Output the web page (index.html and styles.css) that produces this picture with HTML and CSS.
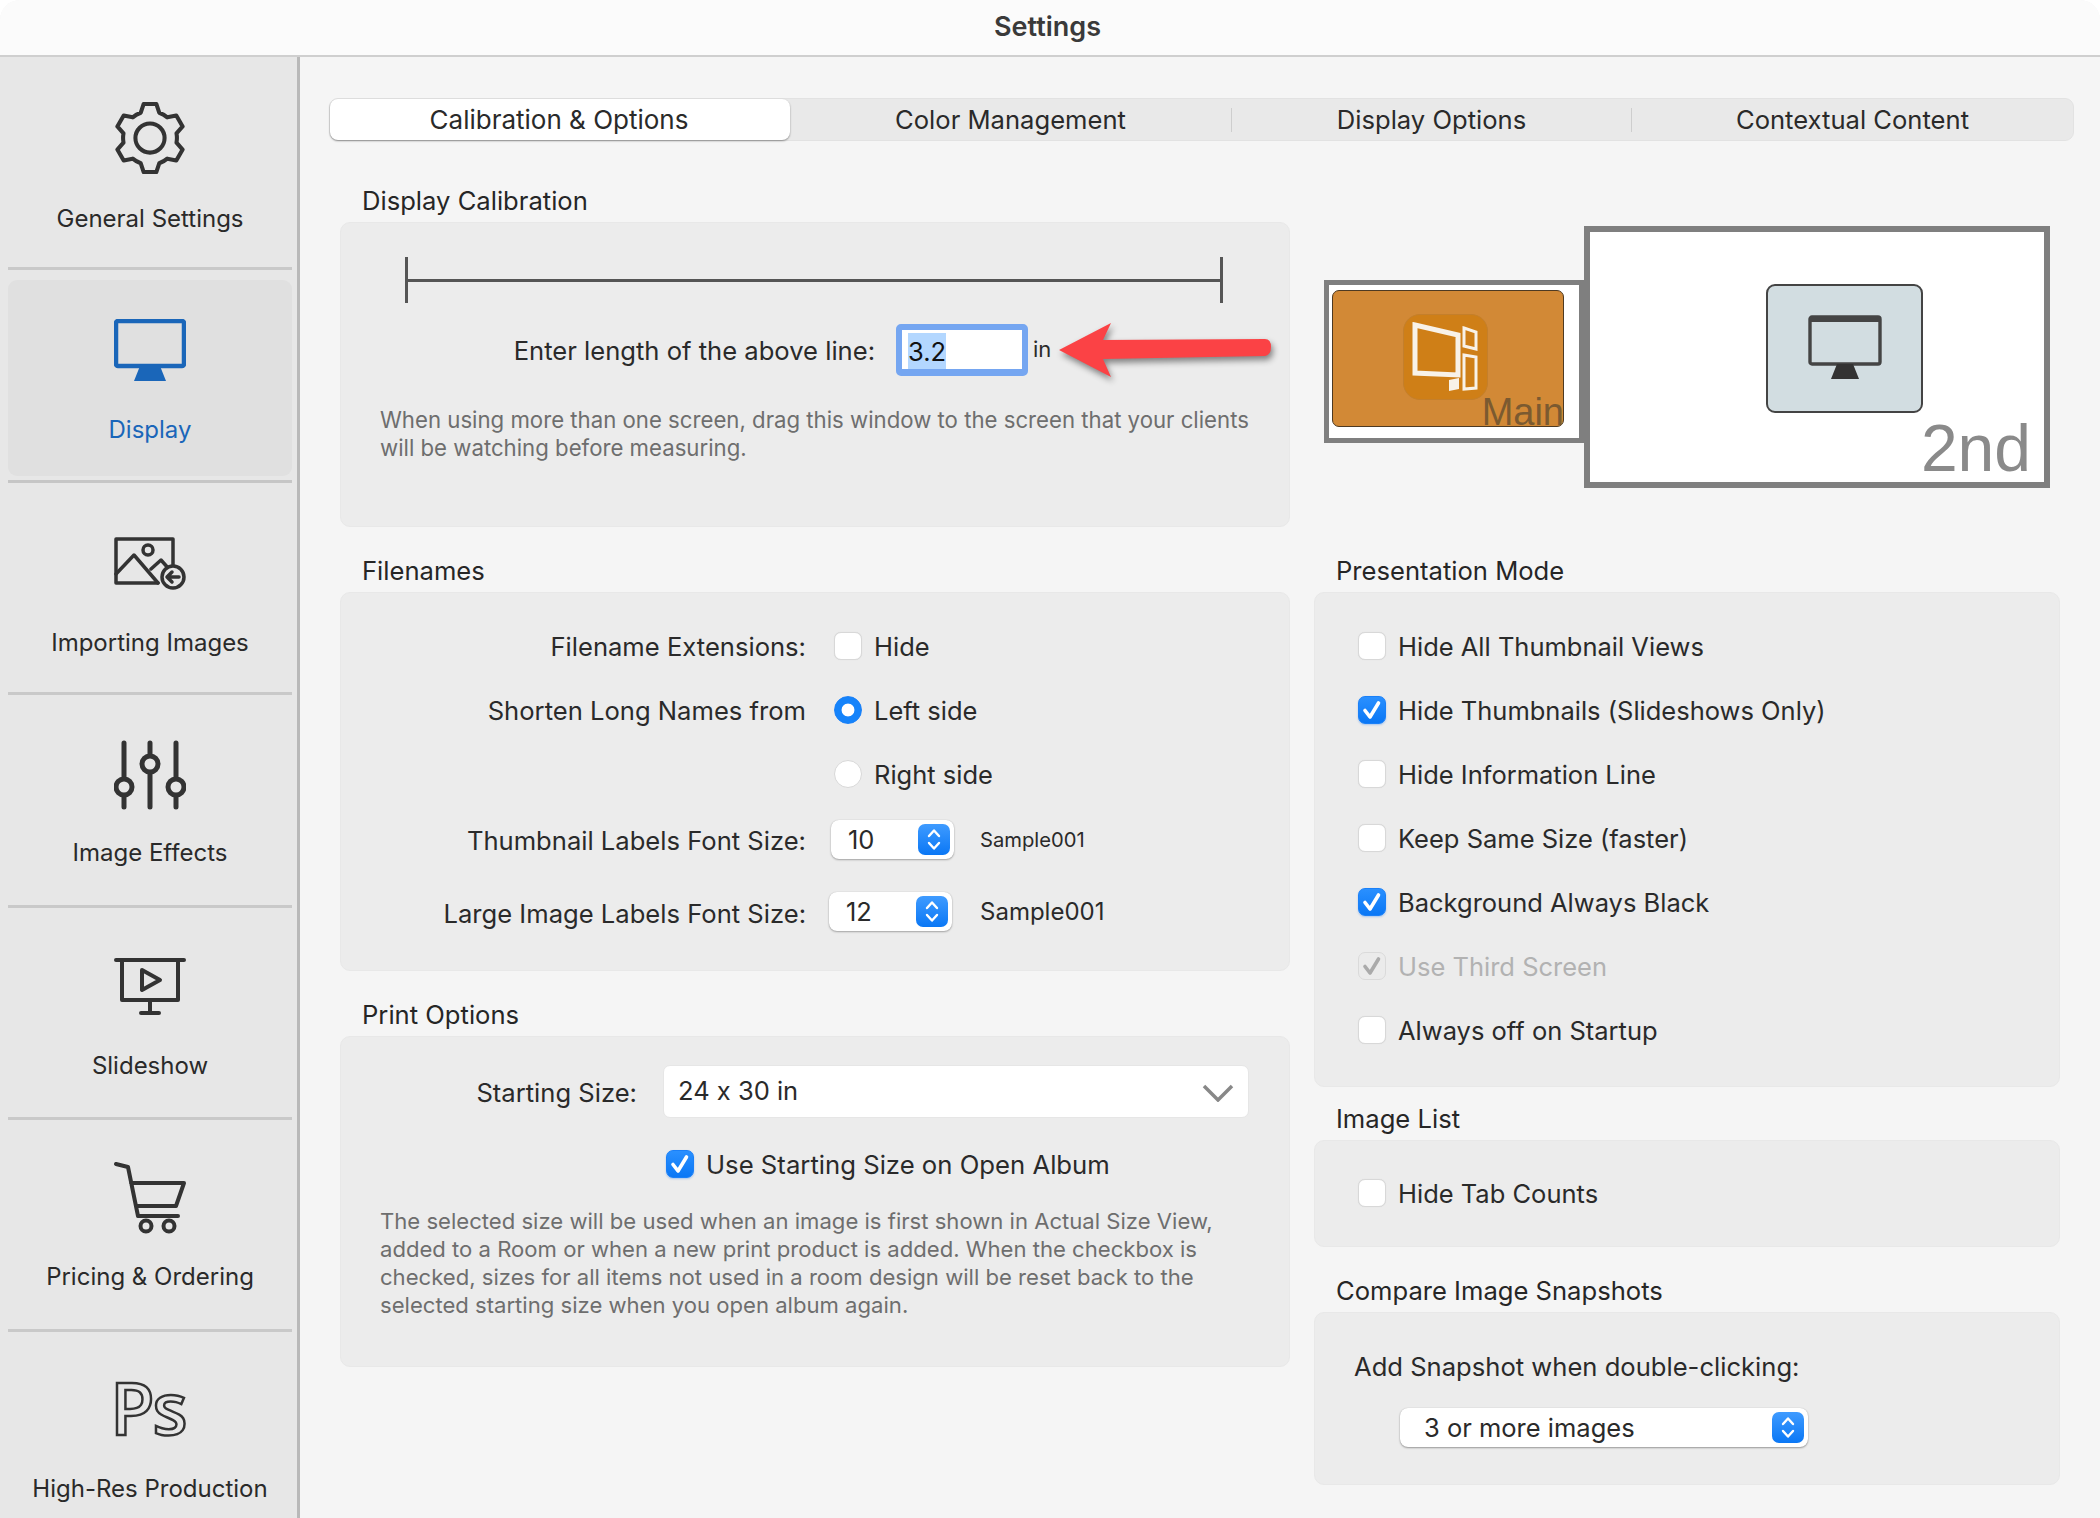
FILE: index.html
```html
<!DOCTYPE html>
<html lang="en">
<head>
<meta charset="utf-8">
<title>Settings</title>
<link rel="stylesheet" href="styles.css">
</head>
<body>
<div class="window">
  <header class="titlebar">Settings</header>
  <div class="content">
    <nav class="sidebar">
      <div class="nav-item nudge-first">
        <div class="icon-slot">
          <svg class="nav-icon gear" viewBox="-36 -37 72 74"><path d="M-9.5-26L-6.5-35H6.5L9.5-26A27 27 0 0 1 17.77-21.23L27.06-23.13L33.56-11.87L27.27-4.77A27 27 0 0 1 27.27 4.77L33.56 11.87L27.06 23.13L17.77 21.23A27 27 0 0 1 9.5 26L6.5 35H-6.5L-9.5 26A27 27 0 0 1-17.77 21.23L-27.06 23.13L-33.56 11.87L-27.27 4.77A27 27 0 0 1-27.27-4.77L-33.56-11.87L-27.06-23.13L-17.77-21.23A27 27 0 0 1-9.5-26Z"/><circle r="15"/></svg>
        </div>
        <span class="nav-label">General Settings</span>
      </div>
      <div class="nav-item is-active">
        <div class="icon-slot">
          <svg class="nav-icon display" viewBox="0 0 72 62"><rect x="2" y="2" width="68" height="45" rx="2"/><path class="solid" d="M26 47H46L52 62H20Z"/></svg>
        </div>
        <span class="nav-label">Display</span>
      </div>
      <div class="nav-item">
        <div class="icon-slot">
          <svg class="nav-icon import" viewBox="0 0 72 54"><path d="M59 39V2H2V46H44"/><circle cx="34" cy="13" r="5"/><path d="M2 37L20 18L44 46M37 32L47 23L55 32"/><circle cx="59" cy="40" r="11"/><path d="M65 40H53M58 35L53 40L58 45"/></svg>
        </div>
        <span class="nav-label">Importing Images</span>
      </div>
      <div class="nav-item nudge-1">
        <div class="icon-slot">
          <svg class="nav-icon sliders" viewBox="0 0 72 70"><path d="M10 3V67M36 3V67M62 3V67"/><circle cx="10" cy="47" r="8"/><circle cx="36" cy="24" r="8"/><circle cx="62" cy="47" r="8"/></svg>
        </div>
        <span class="nav-label">Image Effects</span>
      </div>
      <div class="nav-item nudge-1">
        <div class="icon-slot">
          <svg class="nav-icon slideshow" viewBox="0 0 72 66"><path d="M2 2H70M8 2V42H64V2M36 42V55M27 55H45"/><path d="M28 12L46 22L28 32Z"/></svg>
        </div>
        <span class="nav-label">Slideshow</span>
      </div>
      <div class="nav-item nudge-2">
        <div class="icon-slot">
          <svg class="nav-icon cart" viewBox="0 0 72 72"><path d="M2 2L14 5L24 54H64M17 21H70L62 44H22"/><circle cx="32" cy="64" r="5.5"/><circle cx="55" cy="64" r="5.5"/></svg>
        </div>
        <span class="nav-label">Pricing &amp; Ordering</span>
      </div>
      <div class="nav-item nudge-2 is-last">
        <div class="icon-slot">
          <span class="ps-icon">Ps</span>
        </div>
        <span class="nav-label">High-Res Production</span>
      </div>
    </nav>
    <main class="main">
      <div class="tabs">
        <div class="tab tab-active">Calibration &amp; Options</div>
        <div class="tab tab-color">Color Management</div>
        <div class="tab-sep"></div>
        <div class="tab tab-display">Display Options</div>
        <div class="tab-sep"></div>
        <div class="tab tab-context">Contextual Content</div>
      </div>
      <div class="grid">
        <section class="section">
          <h2 class="heading">Display Calibration</h2>
          <div class="panel panel-calib">
            <div class="ruler"><div class="ruler-line"></div></div>
            <div class="length-row">
              <span class="field-label">Enter length of the above line:</span>
              <div class="length-input"><span class="selected">3.2</span></div>
              <span class="unit">in</span>
              <svg class="arrow" viewBox="0 0 220 60"><path d="M2 30L54 3L46 20L208 19Q214 19 214 27Q214 35 208 36L46 39L54 57Z"/></svg>
            </div>
            <p class="help">When using more than one screen, drag this window to the screen that your clients<br>will be watching before measuring.</p>
          </div>
        </section>
        <div class="preview">
          <div class="screen screen-main">
            <div class="tile-orange">
              <div class="tile-orange-inner">
                <svg class="devices" viewBox="0 0 66 70"><path class="dv" d="M3 3L46 13V53L3 51Z"/><path class="dv thin" d="M52 6L64 10V27L52 24ZM52 33L64 35V66L52 67Z"/><path class="dv-solid" d="M37 58L47 56V67L37 69Z"/></svg>
              </div>
              <span class="main-label">Main</span>
            </div>
          </div>
          <div class="screen screen-second">
            <div class="tile-blue">
              <svg class="mini-monitor" viewBox="0 0 74 64"><rect x="2" y="2" width="70" height="47" rx="2"/><path class="bar" d="M2 5H72"/><path class="solid" d="M29 49H45L51 64H23Z"/></svg>
            </div>
            <span class="second-label">2nd</span>
          </div>
        </div>
        <div class="col">
          <section class="section">
            <h2 class="heading">Filenames</h2>
            <div class="panel panel-files">
              <div class="form-row">
                <span class="field-label">Filename Extensions:</span>
                <label class="opt"><span class="box"></span>Hide</label>
              </div>
              <div class="form-row">
                <span class="field-label">Shorten Long Names from</span>
                <label class="opt"><span class="radio radio-on"></span>Left side</label>
              </div>
              <div class="form-row">
                <span></span>
                <label class="opt"><span class="radio"></span>Right side</label>
              </div>
              <div class="form-row">
                <span class="field-label field-label-low">Thumbnail Labels Font Size:</span>
                <div class="spin-wrap">
                  <div class="spinner">10<span class="stepper"><svg viewBox="0 0 32 31"><path d="M11 12L16 6.5L21 12M11 19L16 24.5L21 19"/></svg></span></div>
                  <span class="sample sample-sm">Sample001</span>
                </div>
              </div>
              <div class="form-row form-row-large">
                <span class="field-label field-label-low">Large Image Labels Font Size:</span>
                <div class="spin-wrap spin-wrap-large">
                  <div class="spinner">12<span class="stepper"><svg viewBox="0 0 32 31"><path d="M11 12L16 6.5L21 12M11 19L16 24.5L21 19"/></svg></span></div>
                  <span class="sample sample-lg">Sample001</span>
                </div>
              </div>
            </div>
          </section>
          <section class="section section-print">
            <h2 class="heading">Print Options</h2>
            <div class="panel panel-print">
              <div class="size-row">
                <span class="field-label size-label">Starting Size:</span>
                <div class="size-select">24 x 30 in
                  <svg class="chevron" viewBox="0 0 32 18"><path d="M2 2L16 16L30 2"/></svg>
                </div>
              </div>
              <label class="opt opt-print"><span class="box box-on"><svg viewBox="0 0 28 28"><path d="M7 14.5L12 21L20.5 7"/></svg></span>Use Starting Size on Open Album</label>
              <p class="help help-print">The selected size will be used when an image is first shown in Actual Size View,<br>added to a Room or when a new print product is added. When the checkbox is<br>checked, sizes for all items not used in a room design will be reset back to the<br>selected starting size when you open album again.</p>
            </div>
          </section>
        </div>
        <div class="col">
          <section class="section">
            <h2 class="heading">Presentation Mode</h2>
            <div class="panel panel-mode">
              <label class="opt opt-row"><span class="box"></span>Hide All Thumbnail Views</label>
              <label class="opt opt-row"><span class="box box-on"><svg viewBox="0 0 28 28"><path d="M7 14.5L12 21L20.5 7"/></svg></span>Hide Thumbnails (Slideshows Only)</label>
              <label class="opt opt-row"><span class="box"></span>Hide Information Line</label>
              <label class="opt opt-row"><span class="box"></span>Keep Same Size (faster)</label>
              <label class="opt opt-row"><span class="box box-on"><svg viewBox="0 0 28 28"><path d="M7 14.5L12 21L20.5 7"/></svg></span>Background Always Black</label>
              <label class="opt opt-row opt-disabled"><span class="box box-off"><svg viewBox="0 0 28 28"><path d="M7 14.5L12 21L20.5 7"/></svg></span>Use Third Screen</label>
              <label class="opt opt-row"><span class="box"></span>Always off on Startup</label>
            </div>
          </section>
          <section class="section section-list">
            <h2 class="heading">Image List</h2>
            <div class="panel panel-list">
              <label class="opt opt-row"><span class="box"></span>Hide Tab Counts</label>
            </div>
          </section>
          <section class="section section-compare">
            <h2 class="heading">Compare Image Snapshots</h2>
            <div class="panel panel-compare">
              <div class="compare-label">Add Snapshot when double-clicking:</div>
              <div class="pop-select">3 or more images<span class="stepper"><svg viewBox="0 0 32 31"><path d="M11 12L16 6.5L21 12M11 19L16 24.5L21 19"/></svg></span></div>
            </div>
          </section>
        </div>
      </div>
    </main>
  </div>
</div>
</body>
</html>
```
FILE: styles.css
```css
* { box-sizing: border-box; }
html, body { margin: 0; padding: 0; background: #fff; }
body { font-family: Inter, "Liberation Sans", sans-serif; font-size: 25.5px; font-feature-settings: "calt" 0; color: #2a2a2a; overflow: hidden; }
.window { width: 2100px; height: 1518px; display: flex; flex-direction: column; overflow: hidden; border-radius: 20px 20px 0 0; background: #f5f5f5; }
.titlebar { height: 57px; flex: none; background: #fbfbfb; border-bottom: 2px solid #cfcfcf; display: flex; align-items: center; justify-content: center; padding: 0 5px 2px 0; font-weight: 600; font-size: 27px; color: #3a3a3a; }
.content { flex: 1; display: flex; min-height: 0; }

.sidebar { width: 300px; flex: none; background: #e7e7e7; border-right: 3px solid #b9b9b9; padding: 1px 5px 0 8px; }
.nav-item { position: relative; height: 212.4px; display: flex; flex-direction: column; align-items: center; border-bottom: 3px solid #c9c9c9; }
.nav-item.is-last { border-bottom: 0; }
.nav-item.is-active { color: #1a66b9; border-bottom-color: #c6c6c6; }
.nav-item.is-active::before { content: ""; position: absolute; left: 0; right: 0; top: 10px; bottom: 4px; background: #e0e0e0; border-radius: 9px; }
.icon-slot { position: relative; height: 145px; padding-top: 15px; flex: none; display: flex; flex-direction: column; align-items: center; justify-content: center; }
.nav-label { position: relative; line-height: 30px; font-size: 24px; white-space: nowrap; }
.nudge-first .nav-label { margin-top: 1px; }
.nudge-1 .nav-label { margin-top: -2px; }
.nudge-2 .nav-label { margin-top: -3px; }
.nav-icon { display: block; fill: none; stroke: #333; stroke-width: 4; stroke-linejoin: round; stroke-linecap: round; }
.gear { width: 70px; height: 72px; stroke-width: 4.2; }
.display { width: 72px; height: 62px; stroke: #1a66b9; stroke-width: 4.5; }
.display .solid { fill: #1a66b9; stroke: none; }
.import { width: 72px; height: 54px; stroke-width: 3.5; margin-top: 2px; }
.import circle:nth-of-type(2) { fill: #e7e7e7; }
.sliders { width: 72px; height: 70px; stroke-width: 5; margin-top: -1px; }
.sliders circle { fill: #e7e7e7; }
.slideshow { width: 72px; height: 66px; margin-top: 6px; }
.cart { width: 72px; height: 72px; margin-top: -3px; }
.ps-icon { font-family: "Open Sans", sans-serif; font-weight: 600; font-size: 72px; line-height: 72px; color: transparent; -webkit-text-stroke: 2.5px #333; letter-spacing: -2px; margin: -10px 4px 0 0; }

.main { flex: 1; padding: 41px 26px 0 29px; min-width: 0; }
.tabs { height: 43px; background: #e9e9e9; border: 1px solid #e2e2e2; border-radius: 9px; display: flex; align-items: center; }
.tab { height: 100%; display: flex; align-items: center; justify-content: center; font-size: 25.6px; flex: none; padding-bottom: 1px; }
.tab-active { width: 460px; font-size: 26px; padding-right: 2px; background: #fff; border-radius: 8px; box-shadow: 0 1px 2px rgba(0,0,0,.4); }
.tab-color { width: 441px; }
.tab-display { width: 399px; }
.tab-context { flex: 1; }
.tab-sep { width: 1px; height: 24px; background: #cecece; flex: none; }

.grid { display: grid; grid-template-columns: 950px 746px; column-gap: 24px; row-gap: 28px; margin: 44px 14px 0 11px; align-items: start; }
.section-print { margin-top: 28px; }
.section-list { margin-top: 16px; }
.section-compare { margin-top: 28px; }
.heading { margin: 0 0 7px; height: 30px; line-height: 31px; padding-left: 22px; font-size: 25.6px; font-weight: 400; color: #262626; }
.panel { background: #ececec; border: 1px solid #e8e8e8; border-radius: 10px; }
.field-label { text-align: right; font-size: 25.6px; }
.form-row .field-label { padding-bottom: 2px; }
.form-row .field-label-low { padding: 2px 0 0; }
.help { margin: 0; color: #6e6e6e; font-size: 22.2px; line-height: 28px; padding-left: 39px; }

.panel-calib { height: 305px; padding-top: 34px; }
.ruler { height: 46px; margin: 0 66px 0 64px; border-left: 3px solid #555; border-right: 3px solid #555; display: flex; align-items: center; }
.ruler-line { width: 100%; height: 3px; background: #555; }
.length-row { display: flex; align-items: center; height: 52px; margin-top: 21px; }
.length-row .field-label { width: 534px; margin-right: 21px; }
.length-input { width: 132px; height: 52px; border: 6px solid #75a6f1; border-bottom-width: 7px; border-radius: 5px; background: #fff; padding-left: 6px; display: flex; align-items: flex-start; }
.selected { background: #b3d7ff; width: 38px; height: 36px; margin-top: 3px; line-height: 37px; color: #111; }
.unit { font-size: 22px; margin-left: 5px; margin-top: -2px; }
.arrow { width: 220px; height: 60px; margin-left: 6px; fill: #fb4245; filter: drop-shadow(2px 4px 3px rgba(0,0,0,.45)); }
.panel-calib .help { margin-top: 30px; }

.preview { display: flex; align-items: flex-start; padding: 41px 0 0 10px; }
.screen { background: #fff; border: 5px solid #7f7f7f; flex: none; position: relative; }
.screen-main { width: 260px; height: 163px; margin-top: 54px; padding: 5px 0 0 3px; }
.tile-orange { width: 232px; height: 137px; background: #d28936; border: 1px solid #4e3a22; border-radius: 7px; display: flex; align-items: flex-start; justify-content: center; padding: 23px 0 0 0; position: relative; }
.tile-orange-inner { width: 85px; height: 86px; background: #cf7f17; border: 1px solid #c47f2b; border-radius: 17px; margin-left: -6px; display: flex; align-items: center; justify-content: center; }
.devices { width: 66px; height: 70px; }
.dv { fill: none; stroke: #f8f2e8; stroke-width: 5; }
.dv.thin { stroke-width: 3; }
.dv-solid { fill: #f8f2e8; }
.main-label { position: absolute; right: -1px; bottom: -5px; font-family: "Liberation Sans", sans-serif; font-size: 38px; line-height: 38px; color: #7b5a30; }
.screen-second { width: 466px; height: 262px; border-width: 6px; display: flex; align-items: flex-start; justify-content: flex-start; padding: 52px 0 0 176px; }
.tile-blue { width: 157px; height: 129px; background: #d2dde1; border: 2px solid #444; border-radius: 9px; display: flex; align-items: center; justify-content: center; padding-bottom: 3px; }
.mini-monitor { width: 74px; height: 64px; fill: none; stroke: #444; stroke-width: 3.4; }
.mini-monitor .bar { stroke-width: 4; }
.mini-monitor .solid { fill: #333; stroke: none; }
.second-label { position: absolute; right: 13px; bottom: -1px; font-family: "Liberation Sans", sans-serif; font-size: 66px; line-height: 70px; color: #8a8a8a; }

.panel-files { height: 379px; padding-top: 22px; }
.form-row { display: grid; grid-template-columns: 465px 1fr; column-gap: 28px; height: 64px; align-items: center; }
.form-row-large { margin-top: 9px; }
.opt { display: flex; align-items: center; gap: 12px; padding-bottom: 2px; }
.box { width: 28px; height: 28px; flex: none; background: #fff; border: 1px solid #d8d8d8; border-radius: 7px; box-shadow: 0 0 1px rgba(0,0,0,.1); display: block; }
.box svg { display: block; fill: none; stroke: #fff; stroke-width: 3.6; stroke-linecap: round; stroke-linejoin: round; margin: -1px; width: 28px; height: 28px; }
.box-on { background: linear-gradient(#2a90ff, #0a77f5); border-color: #1a80f8; box-shadow: 0 1px 2px rgba(10,110,240,.3); }
.box-off { background: #ebebeb; border-color: #dadada; box-shadow: none; }
.box-off svg { stroke: #aaa; }
.opt-disabled { color: #b2b2b2; }
.radio { width: 28px; height: 28px; flex: none; border-radius: 50%; background: #fff; border: 1px solid #d8d8d8; display: block; }
.radio-on { background: radial-gradient(circle, #fff 0 6px, #1583fa 6.8px); border-color: #1a80f8; }
.spin-wrap { display: flex; align-items: center; margin-left: -3px; }
.spin-wrap-large { margin-left: -5px; margin-top: -2px; }
.spinner { width: 123px; height: 39px; background: #fff; border-radius: 8px; box-shadow: 0 1px 2px rgba(0,0,0,.3), 0 0 1px rgba(0,0,0,.2); padding-left: 17px; display: flex; align-items: center; justify-content: space-between; padding-right: 4px; }
.stepper { width: 32px; height: 31px; background: linear-gradient(#3f9bff, #0a77f5); border-radius: 7px; display: block; flex: none; }
.stepper svg { display: block; width: 32px; height: 31px; fill: none; stroke: #fff; stroke-width: 2.4; stroke-linecap: round; stroke-linejoin: round; }
.sample { margin-left: 26px; }
.sample-sm { font-size: 20.2px; }
.sample-lg { font-size: 24px; margin-left: 28px; }

.panel-print { height: 331px; padding-top: 28px; }
.size-row { display: flex; align-items: flex-start; }
.size-label { width: 296px; margin-right: 26px; margin-top: 13px; line-height: 30px; }
.size-select { width: 586px; height: 53px; background: #fff; border: 1px solid #e6e6e6; border-radius: 7px; display: flex; align-items: center; justify-content: space-between; padding: 0 14px 3px 14px; }
.chevron { width: 32px; height: 18px; margin-top: 5px; fill: none; stroke: #888; stroke-width: 3.5; }
.opt-print { margin: 32px 0 0 325px; height: 28px; padding-bottom: 0; font-size: 25.7px; }
.help-print { margin-top: 29px; font-size: 22.1px; }

.panel-mode { height: 495px; padding: 22px 0 0 43px; }
.opt-row { height: 64px; }
.panel-list { height: 107px; padding: 21px 0 0 43px; }
.panel-compare { height: 173px; padding-top: 39px; }
.compare-label { height: 32px; line-height: 30px; margin-left: 39px; font-size: 25.6px; }
.pop-select { width: 408px; height: 39px; margin: 24px 0 0 85px; background: #fff; border-radius: 8px; box-shadow: 0 1px 2px rgba(0,0,0,.35), 0 0 1px rgba(0,0,0,.2); display: flex; align-items: center; justify-content: space-between; padding: 0 4px 0 24px; }
```
